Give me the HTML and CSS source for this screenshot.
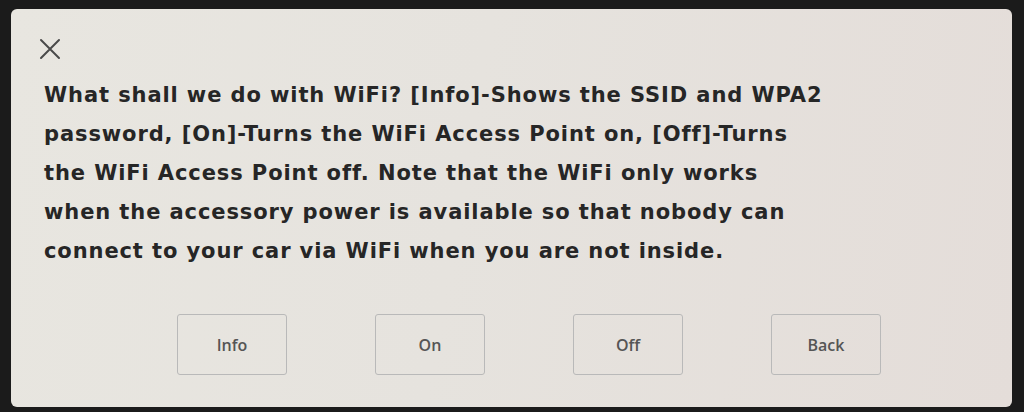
FILE: index.html
```html
<!DOCTYPE html>
<html lang="en">
<head>
<meta charset="utf-8">
<title>WiFi</title>
<link rel="stylesheet" href="styles.css">
</head>
<body>
<div class="screen">
  <div class="dialog">
    <button class="close" aria-label="Close">
      <svg width="22" height="22" viewBox="0 0 22 22"><path d="M2 2 L20 20 M20 2 L2 20" stroke="#4a4a4a" stroke-width="2" fill="none" stroke-linecap="round"/></svg>
    </button>
    <p class="message">What shall we do with WiFi? [Info]-Shows the SSID and WPA2<br>password, [On]-Turns the WiFi Access Point on, [Off]-Turns<br>the WiFi Access Point off. Note that the WiFi only works<br>when the accessory power is available so that nobody can<br>connect to your car via WiFi when you are not inside.</p>
    <div class="actions">
      <button class="btn">Info</button>
      <button class="btn">On</button>
      <button class="btn">Off</button>
      <button class="btn">Back</button>
    </div>
  </div>
</div>
</body>
</html>
```

FILE: styles.css
```css
html, body {
  margin: 0;
  padding: 0;
  height: 100%;
}
body {
  background: #1b1b1b;
  font-family: "Open Sans", "DejaVu Sans", sans-serif;
}
.screen {
  box-sizing: border-box;
  height: 412px;
  padding: 9px 12px 5px 11px;
}
.dialog {
  box-sizing: border-box;
  height: 100%;
  background: linear-gradient(100deg, #e8e6e0 0%, #e6e3de 45%, #e4ddd9 100%);
  border-radius: 6px;
  padding: 28px 20px 0 27px;
  display: flex;
  flex-direction: column;
}
.close {
  width: 24px;
  height: 24px;
  padding: 0;
  border: 0;
  background: none;
  display: flex;
  align-items: center;
  justify-content: center;
}
.message {
  margin: 15px 0 0 6px;
  font-family: "DejaVu Sans", "Open Sans", sans-serif;
  font-size: 21px;
  font-weight: 700;
  line-height: 39px;
  color: #262626;
  letter-spacing: 0.9px;
}
.actions {
  display: flex;
  gap: 88px;
  margin: 43px 0 0 139px;
}
.btn {
  width: 110px;
  height: 61px;
  box-sizing: border-box;
  border: 1px solid #b9b9b9;
  border-radius: 3px;
  background: transparent;
  font-family: "Open Sans", "DejaVu Sans", sans-serif;
  font-size: 16px;
  font-weight: 600;
  color: #555;
}
```
